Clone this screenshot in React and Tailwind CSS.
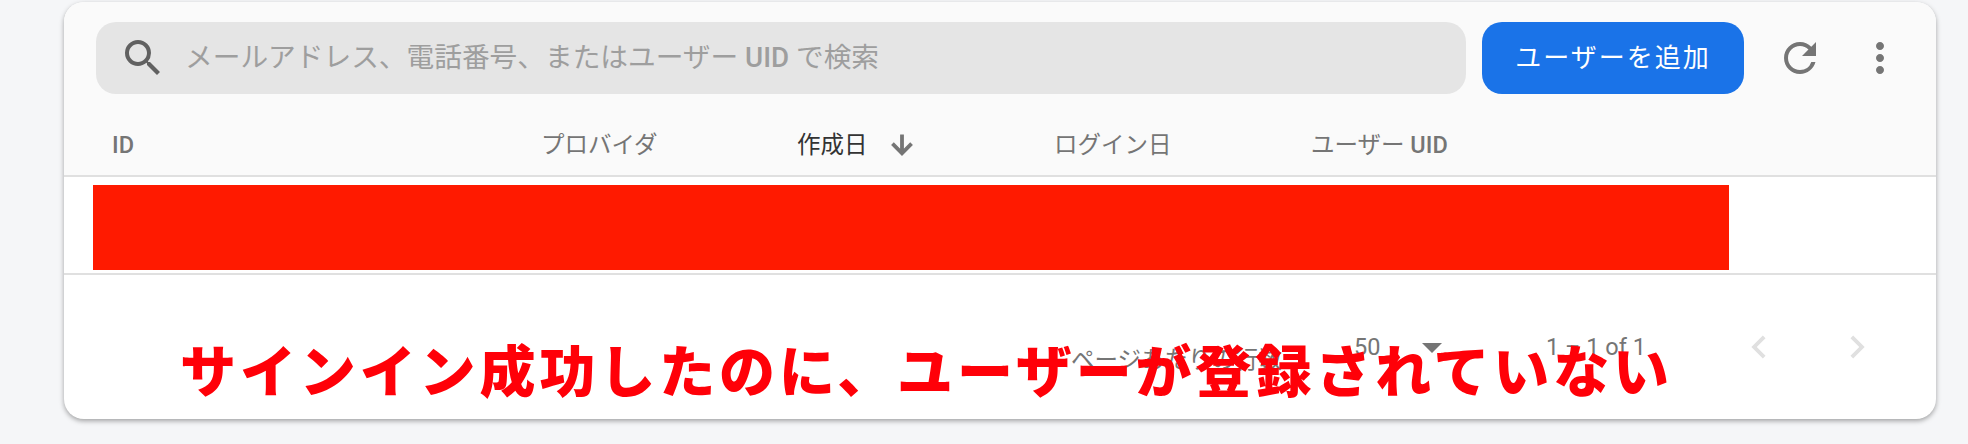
const FONT = "font-['Roboto','Noto_Sans_CJK_JP',sans-serif]";

function Icon({ d, className }) {
  return (
    <svg viewBox="0 0 24 24" fill="currentColor" className={className}>
      <path d={d} />
    </svg>
  );
}

const icons = {
  search:
    "M15.5 14h-.79l-.28-.27A6.471 6.471 0 0 0 16 9.5 6.5 6.5 0 1 0 9.5 16c1.61 0 3.09-.59 4.23-1.57l.27.28v.79l5 4.99L20.49 19l-4.99-5zm-6 0C7.01 14 5 11.99 5 9.5S7.01 5 9.5 5 14 7.01 14 9.5 11.99 14 9.5 14z",
  refresh:
    "M17.65 6.35A7.958 7.958 0 0 0 12 4c-4.42 0-7.99 3.58-7.99 8s3.57 8 7.99 8c3.73 0 6.84-2.55 7.73-6h-2.08A5.99 5.99 0 0 1 12 18c-3.31 0-6-2.69-6-6s2.69-6 6-6c1.66 0 3.14.69 4.22 1.78L13 11h7V4l-2.35 2.35z",
  more:
    "M12 8c1.1 0 2-.9 2-2s-.9-2-2-2-2 .9-2 2 .9 2 2 2zm0 2c-1.1 0-2 .9-2 2s.9 2 2 2 2-.9 2-2-.9-2-2-2zm0 6c-1.1 0-2 .9-2 2s.9 2 2 2 2-.9 2-2-.9-2-2-2z",
  down: "M20 12l-1.41-1.41L13 16.17V4h-2v12.17l-5.58-5.59L4 12l8 8 8-8z",
  prev: "M15.41 7.41L14 6l-6 6 6 6 1.41-1.41L10.83 12z",
  next: "M10 6L8.59 7.41 13.17 12l-4.58 4.59L10 18l6-6z",
};

export default function App() {
  return (
    <div className={`${FONT} h-[444px] w-[1968px] overflow-hidden bg-[#f5f6f8] pl-[64px] pt-[2px]`}>
      <div className="relative flex h-[417px] w-[1872px] flex-col overflow-hidden rounded-[20px] bg-white shadow-[0_2px_5px_rgba(0,0,0,0.35)]">
        <div className="h-[173px] bg-[#fafafa]">
          <div className="flex items-center pl-[32px] pt-[20px]">
            <div className="flex h-[72px] w-[1370px] items-center rounded-[20px] bg-[#e5e5e5] pl-[23px]">
              <Icon d={icons.search} className="h-[48px] w-[48px] text-[#616161]" />
              <span className="ml-[18px] text-[27.7px] leading-none text-[#9e9e9e]">
                メールアドレス、電話番号、またはユーザー <span className="font-medium">UID</span> で検索
              </span>
            </div>
            <button className="ml-[16px] flex h-[72px] w-[262px] items-center justify-center rounded-[20px] bg-[#1a73e8] text-[26px] tracking-[2px] text-white">
              ユーザーを追加
            </button>
            <Icon d={icons.refresh} className="ml-[32px] h-[48px] w-[48px] text-[#757575]" />
            <Icon d={icons.more} className="ml-[32px] h-[48px] w-[48px] text-[#757575]" />
          </div>
          <div className="flex items-center pl-[48px] pt-[35px] text-[23.5px] leading-[32px] text-[#757575]">
            <div className="w-[429px] font-medium">ID</div>
            <div className="w-[256px]">プロバイダ</div>
            <div className="flex w-[257px] items-center text-[#333333]">
              作成日
              <Icon d={icons.down} className="ml-[19px] h-[30px] w-[30px] stroke-[#757575] stroke-1 text-[#757575]" />
            </div>
            <div className="w-[257px]">ログイン日</div>
            <div>
              ユーザー <span className="font-medium">UID</span>
            </div>
          </div>
        </div>
        <div className="h-[100px] border-y-2 border-[#e0e0e0] pl-[29px] pt-[8px]">
          <div className="h-[85px] w-[1636px] bg-[#ff1a00]" />
        </div>
        <div className="flex items-start pl-[1007px] pt-[54px] text-[23.5px] leading-[36px] text-[#757575]">
          <div className="mt-[13px] w-[283px] whitespace-nowrap">ページあたりの行数</div>
          <div className="w-[68px]">50</div>
          <div className="mt-[14px] h-0 w-0 border-x-[10px] border-t-[10px] border-x-transparent border-t-[#757575]" />
          <div className="ml-[104px] w-[102px] whitespace-nowrap">1 – 1 of 1</div>
          <Icon d={icons.prev} className="-mt-[5px] ml-[88px] h-[46px] w-[46px] text-[#e0e0e0]" />
          <Icon d={icons.next} className="-mt-[5px] ml-[52px] h-[46px] w-[46px] text-[#e0e0e0]" />
        </div>
        <div className="absolute left-[116px] top-[336px] whitespace-nowrap text-[56px] font-black leading-[70px] tracking-[3.9px] text-[#ff0008]">
          サインイン成功したのに、ユーザーが登録されていない
        </div>
      </div>
    </div>
  );
}
